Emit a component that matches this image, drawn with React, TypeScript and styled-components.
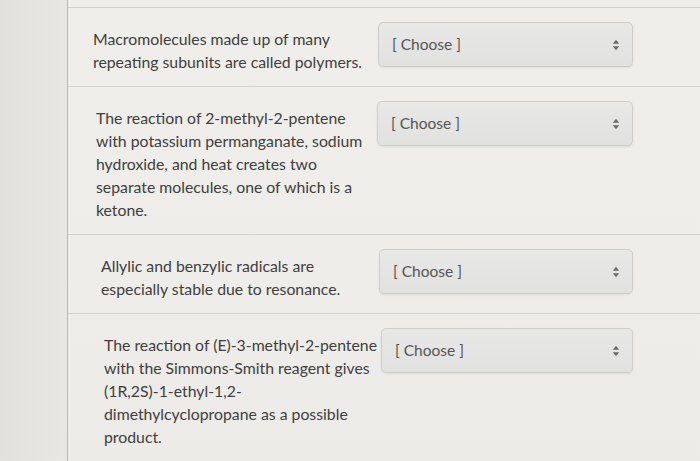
import React from "react";
import styled, { createGlobalStyle } from "styled-components";

const Global = createGlobalStyle`
  html, body { margin: 0; padding: 0; }
  body {
    width: 700px;
    height: 461px;
    overflow: hidden;
    background: #e5e4e0;
    font-family: Lato, "Open Sans", sans-serif;
  }
`;

const Page = styled.div`
  display: flex;
  width: 700px;
  height: 461px;
  background: #e5e4e0;
`;

const Gutter = styled.div`
  width: 67px;
  flex: 0 0 67px;
  border-right: 1px solid #b9b8b3;
  background: linear-gradient(90deg, #e2e1dd 0%, #e8e7e3 100%);
`;

const Content = styled.div`
  flex: 1;
  padding-top: 7px;
  background: linear-gradient(180deg, #efeeea 0%, #eeede9 60%, #ecebe7 100%);
  display: flex;
  flex-direction: column;
`;

const Row = styled.div<{ $shift: number }>`
  display: grid;
  grid-template-columns: ${(p) => 285 - p.$shift}px 255px;
  align-items: start;
  border-top: 1px solid #d3d2ce;
  padding: 19px 0 13px ${(p) => 25 + p.$shift}px;
`;

const Question = styled.div`
  font-size: 15.8px;
  line-height: 23px;
  color: #404040;
`;

const Select = styled.div<{ $nudge: number }>`
  box-sizing: border-box;
  height: 45px;
  margin-top: -5px;
  margin-left: ${(p) => p.$nudge}px;
  display: flex;
  align-items: center;
  justify-content: space-between;
  padding: 0 12px 0 13px;
  border: 1px solid #cfcecb;
  border-radius: 5px;
  background: linear-gradient(180deg, #e8e8e6 0%, #e1e1df 100%);
  box-shadow: 0 1px 2px rgba(0, 0, 0, 0.08);
  font-size: 15.5px;
  color: #555555;
`;

const Label = styled.span`
  margin-top: -2px;
`;

const Arrows = () => (
  <svg width="8" height="12" viewBox="0 0 8 12" aria-hidden="true">
    <path d="M4 0.8 L7.2 4.8 L0.8 4.8 Z" fill="#6a6a6a" />
    <path d="M4 11.2 L7.2 7.2 L0.8 7.2 Z" fill="#6a6a6a" />
  </svg>
);

const items: { text: string; shift: number; nudge: number }[] = [
  {
    text: "Macromolecules made up of many repeating subunits are called polymers.",
    shift: 0,
    nudge: 0,
  },
  {
    text:
      "The reaction of 2-methyl-2-pentene with potassium permanganate, sodium hydroxide, and heat creates two separate molecules, one of which is a ketone.",
    shift: 3,
    nudge: -1,
  },
  {
    text: "Allylic and benzylic radicals are especially stable due to resonance.",
    shift: 8,
    nudge: 1,
  },
  {
    text:
      "The reaction of (E)-3-methyl-2-pentene with the Simmons-Smith reagent gives (1R,2S)-1-ethyl-1,2-dimethylcyclopropane as a possible product.",
    shift: 11,
    nudge: 3,
  },
];

export default function App() {
  return (
    <>
      <Global />
      <Page>
        <Gutter />
        <Content>
          {items.map((it, i) => (
            <Row key={i} $shift={it.shift}>
              <Question>{it.text}</Question>
              <Select $nudge={it.nudge}>
                <Label>[ Choose ]</Label>
                <Arrows />
              </Select>
            </Row>
          ))}
        </Content>
      </Page>
    </>
  );
}
